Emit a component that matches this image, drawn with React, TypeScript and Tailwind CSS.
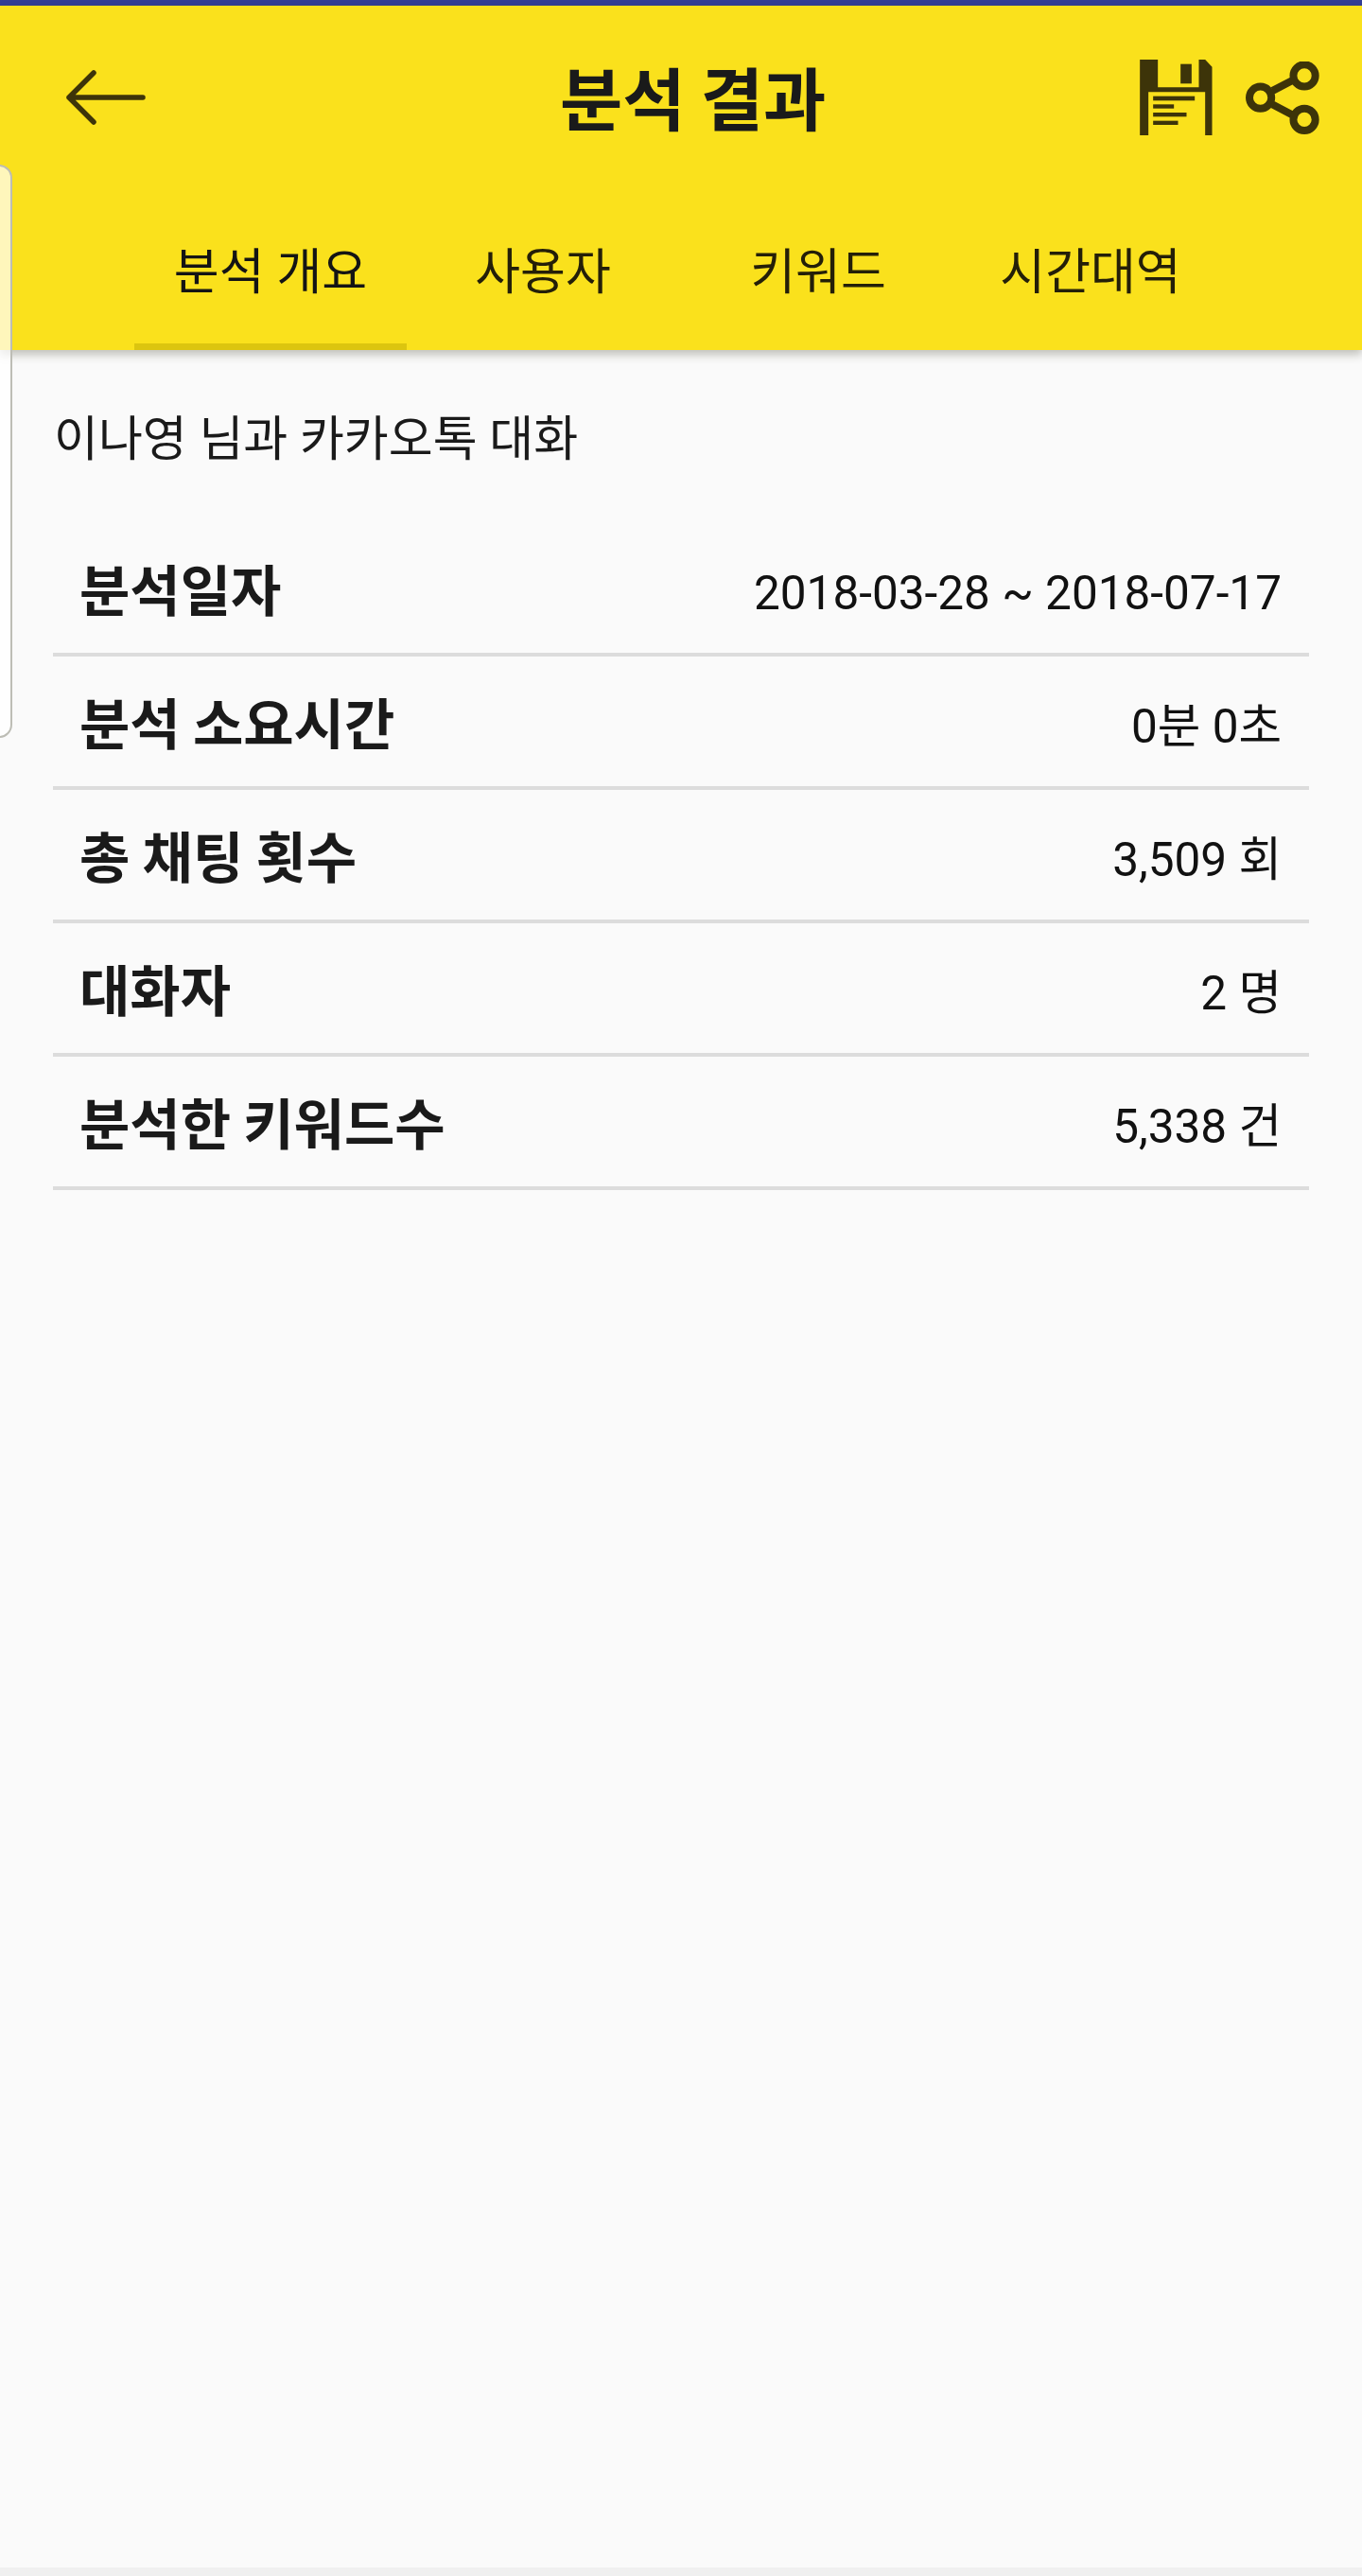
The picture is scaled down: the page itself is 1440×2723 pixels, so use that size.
export default function App() {
  const rows = [
    ["분석일자", "2018-03-28 ~ 2018-07-17"],
    ["분석 소요시간", "0분 0초"],
    ["총 채팅 횟수", "3,509 회"],
    ["대화자", "2 명"],
    ["분석한 키워드수", "5,338 건"],
  ];
  const tabs = [
    { label: "분석 개요", cls: "w-[288px] border-[#dcc50f] text-[#141414]" },
    { label: "사용자", cls: "w-[288px] border-transparent text-[#241f08]" },
    { label: "키워드", cls: "w-[294px] border-transparent text-[#241f08]" },
    { label: "시간대역", cls: "w-[282px] border-transparent text-[#241f08]" },
  ];
  return (
    <div className="relative flex h-[2723px] w-[1440px] flex-col overflow-hidden bg-[#fafafa] font-['Roboto','Noto_Sans_CJK_KR',sans-serif] text-[#1a1a1a]">
      <div className="h-[6px] bg-[#333f94]" />
      <header className="relative z-10 bg-[#fae11c] shadow-[0_5px_9px_rgba(60,60,40,0.3)]">
        <div className="flex h-[194px] items-center pl-[70px] pr-[45px]">
          <svg viewBox="0 0 84 58" className="h-[58px] w-[84px]" fill="none" stroke="#3d3409" strokeWidth="5.5" strokeLinecap="round" strokeLinejoin="round">
            <path d="M81 29H3M29 3 3 29l26 26" />
          </svg>
          <h1 className="ml-[438px] pb-[4px] font-['Noto_Sans_CJK_KR',sans-serif] text-[72px] leading-none font-bold">분석 결과</h1>
          <div className="ml-auto flex items-center gap-[35px]">
            <svg viewBox="78 72 230 240" className="h-[80px] w-[77px]" fill="#3d3409">
              <path d="M78 72H135V160H265V72H285L307 95V312H285V175H105V312H78Z" />
              <rect x="207" y="86" width="35" height="62" />
              <rect x="120" y="188" width="132" height="14" />
              <rect x="120" y="214" width="66" height="13" />
              <rect x="120" y="240" width="106" height="13" />
              <rect x="120" y="266" width="79" height="13" />
            </svg>
            <svg viewBox="412 75 233 232" className="h-[77px] w-[78px]" fill="none" stroke="#3d3409" strokeWidth="24">
              <path d="M497 168 560 135M497 212 560 245" />
              <circle cx="598" cy="120" r="35" />
              <circle cx="458" cy="190" r="35" />
              <circle cx="598" cy="260" r="35" />
            </svg>
          </div>
        </div>
        <nav className="flex h-[170px] pl-[142px]">
          {tabs.map((tab) => (
            <div
              key={tab.label}
              className={`flex items-center justify-center border-b-[7px] pt-[14px] text-[52px] leading-none ${tab.cls}`}
            >
              {tab.label}
            </div>
          ))}
        </nav>
      </header>
      <main className="flex-1 px-[56px]">
        <p className="flex h-[183px] items-center pt-[5px] pl-[1px] text-[51px] leading-none">이나영 님과 카카오톡 대화</p>
        <div>
          {rows.map(([label, value]) => (
            <div key={label} className="flex h-[141px] items-center justify-between border-b-4 border-[#dcdcdc] pl-[28px] pr-[29px]">
              <span className="pb-[2px] font-['Noto_Sans_CJK_KR',sans-serif] text-[58px] leading-none font-bold">{label}</span>
              <span className="pt-[12px] text-[49.5px] leading-none text-[#111111]">{value}</span>
            </div>
          ))}
        </div>
      </main>
      <div className="h-[9px] bg-[#f0f0f0]" />
      <div className="absolute top-[174px] left-[-20px] z-20 h-[606px] w-[33px] rounded-r-[14px] border-2 border-[#bdbdb5] bg-white/70" />
    </div>
  );
}
